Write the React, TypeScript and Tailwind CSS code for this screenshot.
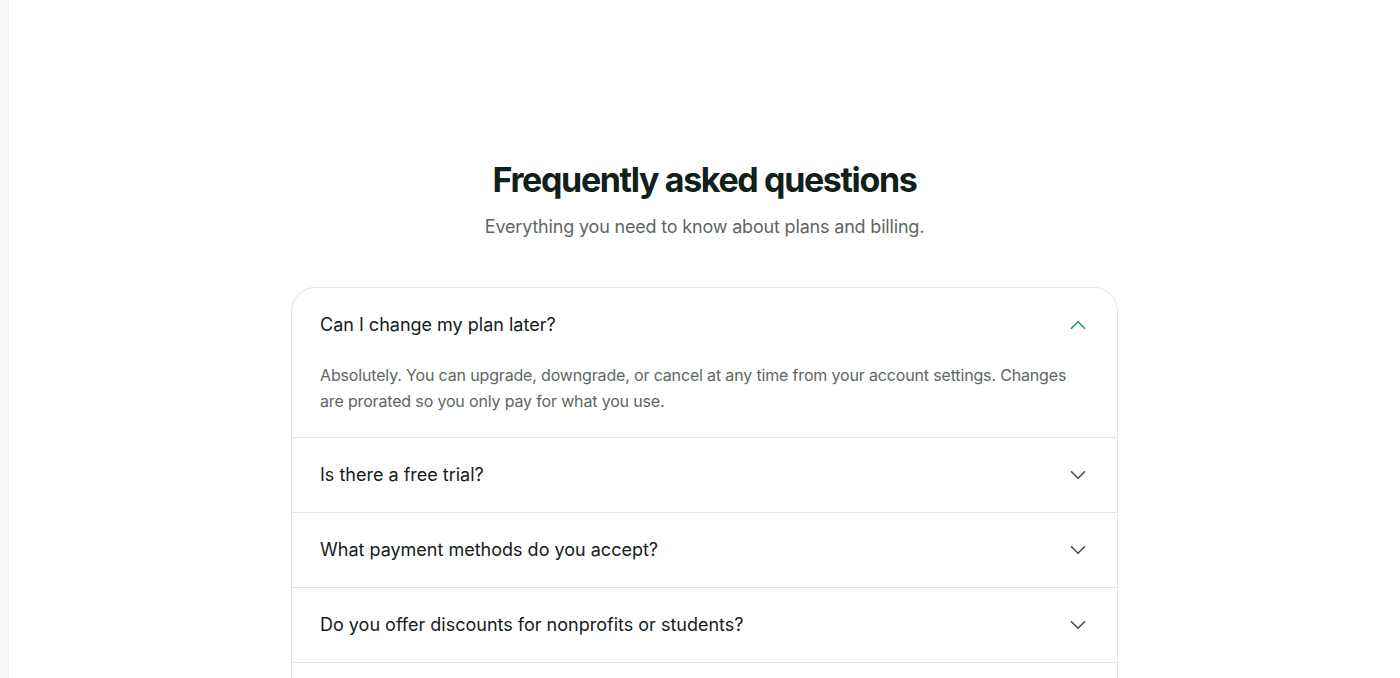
import React, { useState } from "react";

type Faq = { q: string; a?: string };

const faqs: Faq[] = [
  {
    q: "Can I change my plan later?",
    a: "Absolutely. You can upgrade, downgrade, or cancel at any time from your account settings. Changes are prorated so you only pay for what you use.",
  },
  { q: "Is there a free trial?", a: "Yes — every plan starts with a 14-day free trial." },
  { q: "What payment methods do you accept?", a: "All major credit cards, PayPal and bank transfer." },
  { q: "Do you offer discounts for nonprofits or students?", a: "Yes, reach out to our team for details." },
  { q: "How does billing work for teams?", a: "Teams are billed per seat each month." },
];

function Chevron({ open }: { open: boolean }) {
  return (
    <svg
      width="26"
      height="26"
      viewBox="0 0 24 24"
      fill="none"
      stroke="currentColor"
      strokeWidth="1.6"
      strokeLinecap="round"
      strokeLinejoin="round"
      className={"shrink-0 " + (open ? "text-[#2f9a68]" : "text-[#4a5550]")}
    >
      {open ? <path d="m18 15-6-6-6 6" /> : <path d="m6 9 6 6 6-6" />}
    </svg>
  );
}

export default function App() {
  const [open, setOpen] = useState(0);
  return (
    <div
      className="flex min-h-screen bg-white"
      style={{ fontFamily: "Inter, 'Noto Sans', sans-serif" }}
    >
      <aside className="w-[9px] shrink-0 border-r border-[#ececec] bg-[#fafafa]" />
      <main className="flex flex-1 flex-col items-center pt-[160px]">
        <h1 className="text-[34px] leading-[40px] font-bold tracking-[-0.04em] text-[#10211a]">
          Frequently asked questions
        </h1>
        <p className="mt-[13px] text-[18px] leading-[28px] tracking-[-0.01em] text-[#5d6762]">
          Everything you need to know about plans and billing.
        </p>
        <div className="mt-[46px] w-[827px] overflow-hidden rounded-[24px] border border-[#e3e5e4] bg-white">
          {faqs.map((f, i) => {
            const isOpen = open === i;
            return (
              <div key={f.q} className={i > 0 ? "border-t border-[#e3e5e4]" : ""}>
                <button
                  type="button"
                  onClick={() => setOpen(isOpen ? -1 : i)}
                  className="flex h-[74px] w-full items-center justify-between pl-[28px] pr-[26px] text-left"
                >
                  <span className="text-[18px] leading-[24px] font-normal text-[#14201a]">
                    {f.q}
                  </span>
                  <Chevron open={isOpen} />
                </button>
                {isOpen && f.a && (
                  <div className="pb-[23px] pl-[28px] pr-[40px] text-[16px] leading-[26px] tracking-[-0.01em] text-[#5d6762]">
                    {f.a}
                  </div>
                )}
              </div>
            );
          })}
        </div>
      </main>
    </div>
  );
}
